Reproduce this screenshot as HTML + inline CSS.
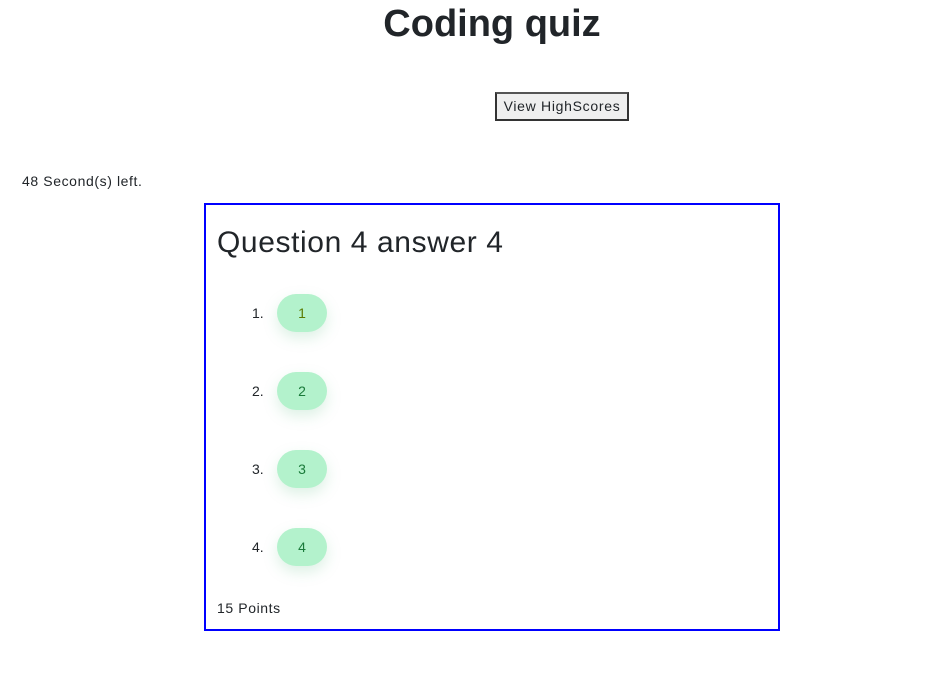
<!DOCTYPE html>
<html><head><meta charset="utf-8"><style>
body{margin:0;font-family:"Liberation Sans",sans-serif;color:#212529;width:930px;height:697px;position:relative;background:#fff;font-size:14px}
h1{position:absolute;left:0;width:984px;text-align:center;top:0;margin:0;font-size:38px;font-weight:bold;line-height:48px}
.btn{position:absolute;left:495px;top:92px;height:25px;border:2px solid #333;border-top-color:#555;background:#efefef;font-size:14px;line-height:25px;text-align:center;box-sizing:content-box;width:130px;letter-spacing:0.7px}
.timer{position:absolute;left:22px;top:173px;font-size:14px;letter-spacing:0.6px}
.box{position:absolute;left:204px;top:203px;width:572px;height:424px;border:2px solid #0000ff}
.q{position:absolute;left:11px;top:18px;font-size:30px;line-height:40px;letter-spacing:0.6px}
.item{position:absolute;left:0;height:40px;width:200px}
.num{position:absolute;left:46px;top:11px;font-size:14px}
.pill{position:absolute;left:71px;top:0;width:50px;height:38px;border-radius:19px;background:#b3f2cc;box-shadow:0 6px 14px rgba(120,200,150,.25);text-align:center;line-height:38px;font-size:14px;color:#1a7a3a}
.pts{position:absolute;left:11px;top:395px;font-size:14px;letter-spacing:0.6px}
</style></head><body>
<h1>Coding quiz</h1>
<div class="btn">View HighScores</div>
<div class="timer">48 Second(s) left.</div>
<div class="box">
<div class="q">Question 4 answer 4</div>
<div class="item" style="top:89px"><span class="num">1.</span><div class="pill" style="color:#5a7a00">1</div></div>
<div class="item" style="top:167px"><span class="num">2.</span><div class="pill">2</div></div>
<div class="item" style="top:245px"><span class="num">3.</span><div class="pill">3</div></div>
<div class="item" style="top:323px"><span class="num">4.</span><div class="pill">4</div></div>
<div class="pts">15 Points</div>
</div>
</body></html>
